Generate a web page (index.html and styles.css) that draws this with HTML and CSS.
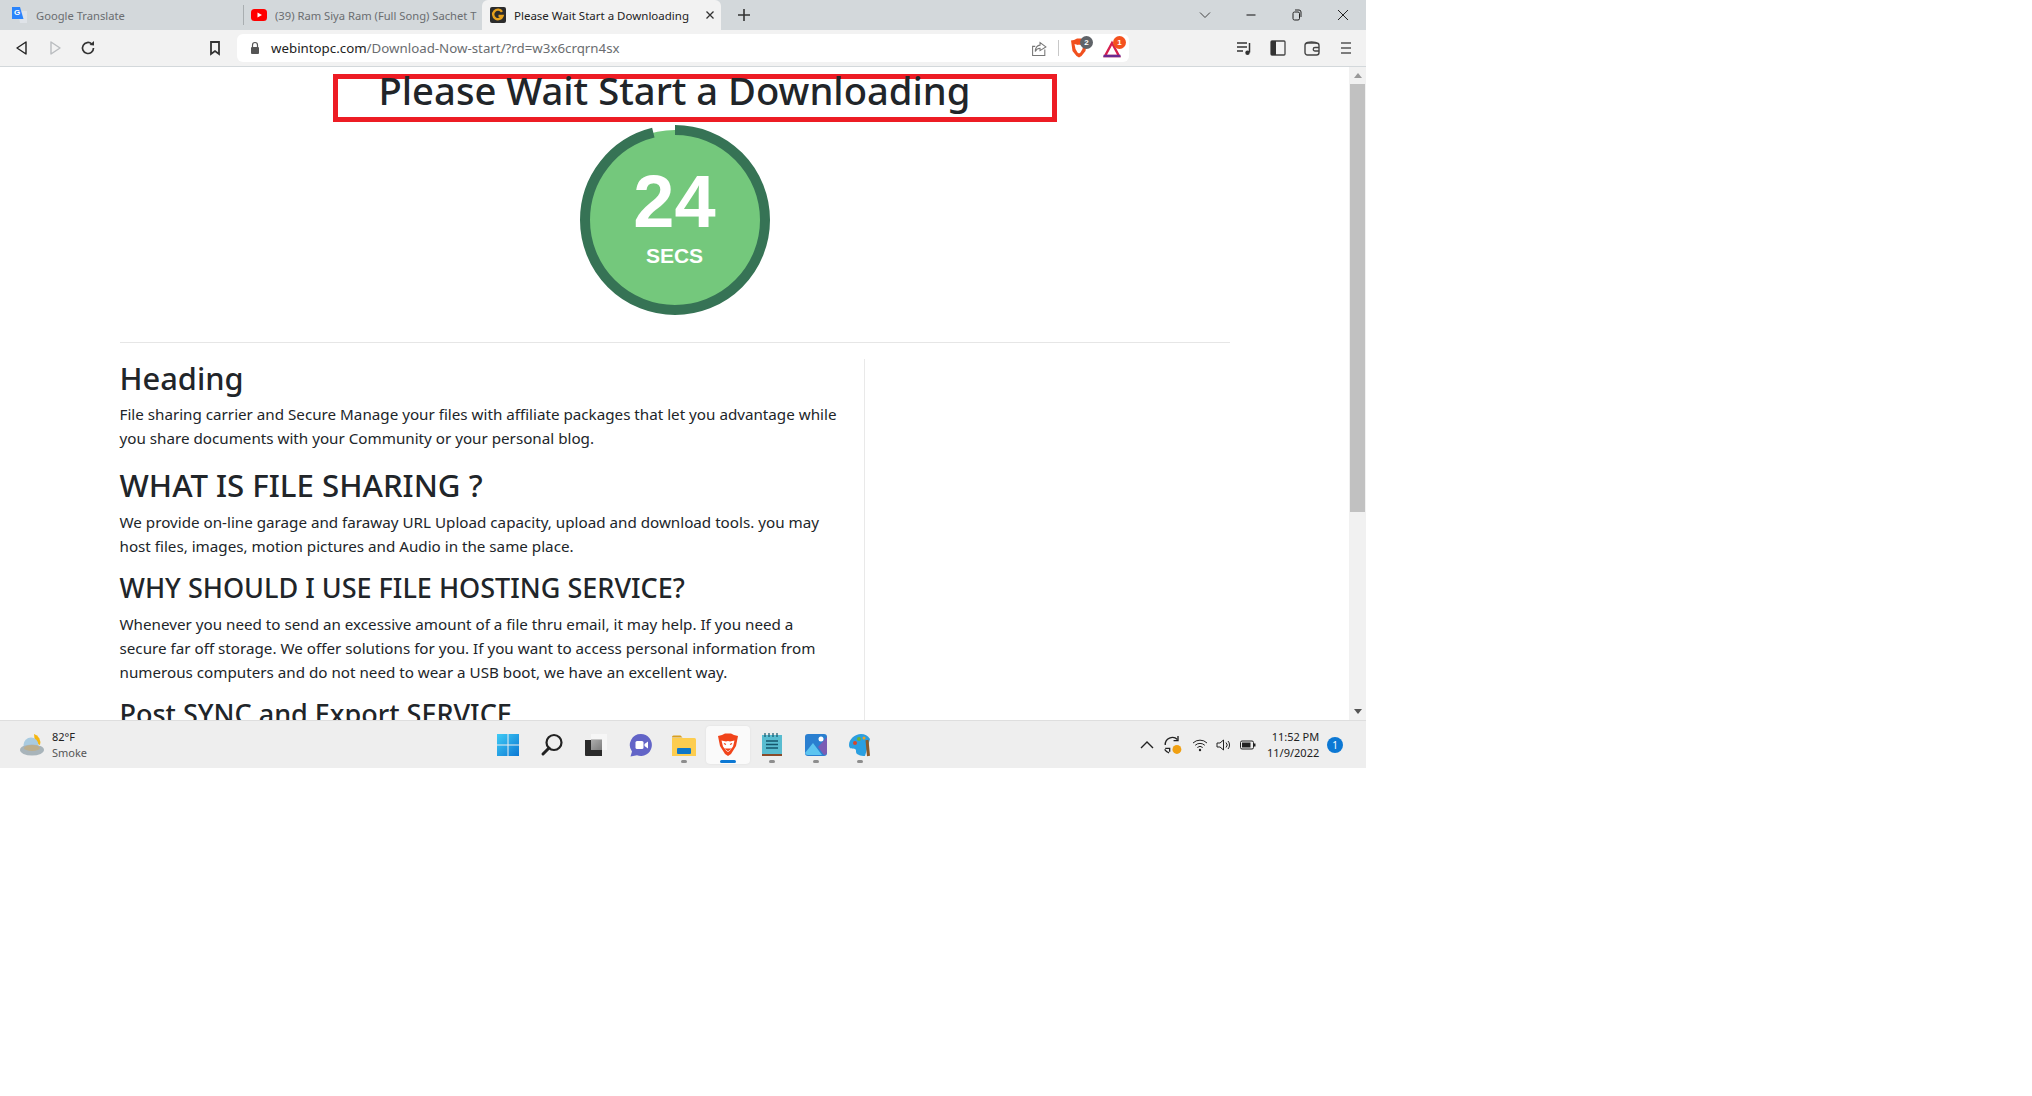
FILE: index.html
```html
<!DOCTYPE html>
<html lang="en">
<head>
<meta charset="utf-8">
<title>Please Wait Start a Downloading</title>
<link rel="stylesheet" href="styles.css">
</head>
<body>
<div class="win">
  <div class="tabstrip">
    <div class="tab tab-first">
      <svg class="fav" viewBox="0 0 16 16"><path d="M6 4h9v12H8z" fill="#dfe3e8"/><path d="M0 0h8l3.500 12H0z" fill="#2a84fc"/><text x="2" y="8" class="favg">G</text></svg>
      <span class="tab-title">Google Translate</span>
    </div>
    <div class="tab tab-second">
      <svg class="fav" viewBox="0 0 16 16"><rect x="0" y="2" width="16" height="12" rx="3.500" fill="#f00"/><path d="M6.500 5.500v5L11 8z" fill="#fff"/></svg>
      <span class="tab-title tab-title-yt">(39) Ram Siya Ram (Full Song) Sachet T</span>
    </div>
    <div class="tab tab-on">
      <svg class="fav" viewBox="0 0 16 16"><rect x="0" y="0" width="16" height="16" rx="2" fill="#2c2c2c"/><path d="M12 4.800A4.800 4.800 0 1 0 12.500 9H8.500" fill="none" stroke="#e7a11c" stroke-width="2.400"/></svg>
      <span class="tab-title dark">Please Wait Start a Downloading</span>
      <svg class="tabx" viewBox="0 0 10 10"><path d="M1.500 1.500l7 7M8.500 1.500l-7 7" stroke="#333" stroke-width="1.300"/></svg>
    </div>
    <svg class="plus" viewBox="0 0 12 12"><path d="M6 0v12M0 6h12" stroke="#333" stroke-width="1.600"/></svg>
    <div class="winctl">
      <svg class="ctl" viewBox="0 0 12 12"><path d="M1 3.500l5 5 5-5" fill="none" stroke="#444"/></svg>
      <svg class="ctl" viewBox="0 0 12 12"><path d="M1.500 6h9" stroke="#222" stroke-width="1.100"/></svg>
      <svg class="ctl" viewBox="0 0 12 12"><rect x="2" y="3" width="6.500" height="8" rx="1.500" fill="none" stroke="#222"/><path d="M4 1h4a2 2 0 0 1 2 2v5" fill="none" stroke="#222"/></svg>
      <svg class="ctl" viewBox="0 0 12 12"><path d="M1 1l10 10M11 1L1 11" stroke="#222"/></svg>
    </div>
  </div>
  <div class="toolbar">
    <svg class="nav" viewBox="0 0 16 16"><path d="M12 2v12L3 8z" fill="none" stroke="#222" stroke-width="1.400" stroke-linejoin="round"/></svg>
    <svg class="nav" viewBox="0 0 16 16"><path d="M4 2v12l9-6z" fill="none" stroke="#b9bcbf" stroke-width="1.400" stroke-linejoin="round"/></svg>
    <svg class="nav" viewBox="0 0 16 16"><path d="M13.500 8a5.500 5.500 0 1 1-1.700-4" fill="none" stroke="#333" stroke-width="1.700"/><path d="M9.500 5l4.500.5V1z" fill="#333"/></svg>
    <svg class="nav book" viewBox="0 0 16 16"><path d="M4 2h8v12l-4-3-4 3z" fill="none" stroke="#333" stroke-width="1.800"/></svg>
    <div class="omni">
      <svg class="lock" viewBox="0 0 12 14"><path d="M3.500 6V4a2.500 2.500 0 0 1 5 0v2" fill="none" stroke="#555" stroke-width="1.200"/><rect x="2" y="6" width="8" height="7" rx="1" fill="#555"/></svg>
      <span class="url"><span class="url-host">webintopc.com</span>/Download-Now-start/?rd=w3x6crqrn4sx</span>
      <svg class="share" viewBox="0 0 16 16"><path d="M8.500 10V7.800c-2 0-3.500.8-4.500 3 0-3.500 2-6 4.500-6V2.500L14 6.500z M13 9v5.500H1.500V6H4" fill="none" stroke="#777" stroke-width="1"/></svg>
      <span class="omni-sep"></span>
      <span class="ext">
        <svg class="ext-ic" viewBox="0 0 18 20"><path d="M4 2l3-1.500h4L14 2l3 .5-1.500 10.500-4 5L9 19.500 6.500 18l-4-5L1 2.500z" fill="#f1501e"/><path d="M4.500 6L8 7l1-.5 1 .5 3.500-1-1 5-2 3.500-1.500 1-1.500-1-2-3.500z" fill="#fff"/></svg>
        <span class="badge badge-gray">2</span>
      </span>
      <span class="ext">
        <svg class="ext-ic" viewBox="0 0 18 20"><path d="M9 5L16 18H2z" fill="none" stroke="#d61f4f" stroke-width="2.400"/><path d="M0.500 18h17" stroke="#6a2a90" stroke-width="2.400"/></svg>
        <span class="badge badge-red">1</span>
      </span>
    </div>
    <div class="tools">
      <svg class="tool" viewBox="0 0 16 16"><path d="M1 3h10M1 7h10M1 11h6" stroke="#333" stroke-width="1.400"/><path d="M13.500 3v9.500" stroke="#333" stroke-width="1.500"/><circle cx="11.500" cy="12.800" r="2.200" fill="#333"/></svg>
      <svg class="tool" viewBox="0 0 16 16"><rect x="1" y="1" width="14" height="14" rx="1" fill="none" stroke="#444" stroke-width="1.300"/><rect x="1" y="1" width="5" height="14" fill="#333"/></svg>
      <svg class="tool" viewBox="0 0 16 16"><rect x="1" y="3" width="14" height="12" rx="2.500" fill="none" stroke="#444" stroke-width="1.400"/><path d="M2 3.500c1-2 10-2 11 0M15 7.500h-4a1.700 1.700 0 0 0 0 3.500h4" fill="none" stroke="#444" stroke-width="1.300"/></svg>
      <svg class="tool" viewBox="0 0 16 16"><path d="M3 3h10M3 8h10M3 13h10" stroke="#555" stroke-width="1.700"/></svg>
    </div>
  </div>
  <div class="view">
    <main class="page">
      <div class="title-wrap">
        <h1 class="title">Please Wait Start a Downloading</h1>
      </div>
      <div class="timer">
        <svg class="ring" viewBox="0 0 190 190">
          <circle cx="95" cy="95" r="90" fill="#74c87c"/>
          <circle cx="95" cy="95" r="90" fill="none" stroke="#367355" stroke-width="10" pathLength="360" stroke-dasharray="346 14" transform="rotate(-90 95 95)"/>
        </svg>
        <div class="timer-text">
          <span class="timer-num">24</span>
          <span class="timer-lbl">SECS</span>
        </div>
      </div>
      <hr class="rule">
      <div class="cols">
        <section class="article">
          <h2 class="h-a">Heading</h2>
          <p>File sharing carrier and Secure Manage your files with affiliate packages that let you advantage while you share documents with your Community or your personal blog.</p>
          <h2 class="h-b">WHAT IS FILE SHARING ?</h2>
          <p>We provide on-line garage and faraway URL Upload capacity, upload and download tools. you may host files, images, motion pictures and Audio in the same place.</p>
          <h3 class="h-c">WHY SHOULD I USE FILE HOSTING SERVICE?</h3>
          <p>Whenever you need to send an excessive amount of a file thru email, it may help. If you need a secure far off storage. We offer solutions for you. If you want to access personal information from numerous computers and do not need to wear a USB boot, we have an excellent way.</p>
          <h3 class="h-c">Post SYNC and Export SERVICE</h3>
        </section>
        <aside class="side"></aside>
      </div>
    </main>
    <div class="scrollbar">
      <span class="arrow arrow-up"></span>
      <span class="thumb"></span>
      <span class="arrow arrow-down"></span>
    </div>
  </div>
  <footer class="taskbar">
    <div class="weather">
      <svg class="wx" viewBox="0 0 26 24"><path d="M15 1a9 9 0 0 1 6 11l-5-2z" fill="#f5b60f"/><circle cx="12" cy="12" r="7.500" fill="#a9cbe0"/><ellipse cx="13" cy="17" rx="12" ry="5.500" fill="#a8b4ba"/><ellipse cx="13" cy="15" rx="8" ry="3" fill="#bcae8c"/></svg>
      <div class="wx-text"><span class="wx-temp">82°F</span><span class="wx-cond">Smoke</span></div>
    </div>
    <div class="apps">
      <span class="app"><svg class="app-ic" viewBox="0 0 24 24"><defs><linearGradient id="winlogo" x1="0" y1="0" x2="1" y2="1"><stop offset="0" stop-color="#3fcbf5"/><stop offset="1" stop-color="#0c78d4"/></linearGradient></defs><path d="M1 1h10.500v10.500H1zM12.500 1H23v10.500H12.500zM1 12.500h10.500V23H1zM12.500 12.500H23V23H12.500z" fill="url(#winlogo)"/></svg></span>
      <span class="app"><svg class="app-ic" viewBox="0 0 24 24"><circle cx="14" cy="9.500" r="7.500" fill="none" stroke="#222" stroke-width="2.200"/><path d="M9 15l-6 6" stroke="#222" stroke-width="3" stroke-linecap="round"/></svg></span>
      <span class="app"><svg class="app-ic" viewBox="0 0 24 24"><defs><linearGradient id="tv" x1="0" y1="0" x2="1" y2="1"><stop offset="0" stop-color="#8a8a8a"/><stop offset="1" stop-color="#111"/></linearGradient></defs><rect x="7" y="1" width="16" height="16" fill="#f6f6f6"/><rect x="7" y="6" width="11" height="11" fill="#c4c4c4"/><path d="M1 7h6v10h11v6H2a1 1 0 0 1-1-1z" fill="#2a2a2a"/><rect x="7" y="7" width="11" height="10" fill="url(#tv)" opacity=".4"/></svg></span>
      <span class="app"><svg class="app-ic" viewBox="0 0 24 24"><path d="M13 1a11 11 0 1 1-4 21.300L2.500 23.500l1.500-5A11 11 0 0 1 13 1z" fill="#6264c7"/><rect x="7.500" y="8" width="8" height="8" rx="1.500" fill="#fff"/><path d="M16.500 11l3.500-2.500v7L16.500 13z" fill="#fff"/></svg></span>
      <span class="app app-dot"><svg class="app-ic" viewBox="0 0 24 24"><path d="M0 4a1.500 1.500 0 0 1 1.500-1.500h7l2 2H0z" fill="#d9a020"/><path d="M0 5h22.500a1.500 1.500 0 0 1 1.500 1.500V23H0z" fill="#fdcd4f"/><rect x="5" y="15" width="14" height="6" rx="1" fill="#0f78c8"/></svg></span>
      <span class="app app-on"><svg class="app-ic" viewBox="0 0 24 24"><path d="M6 2l3-1.500h6L18 2l4 1-2 10-5 8-3 2-3-2-5-8L2 3z" fill="#f1441a"/><path d="M5.500 7.500L10 8.500l2-.5 2 .5 4.500-1-1.500 6-3 4-2 1.500-2-1.500-3-4z" fill="#fff"/><path d="M8 10.500l2 1M16 10.500l-2 1M10 16h4l-2 1.500z" stroke="#f1441a" stroke-width="1.200" fill="#f1441a"/></svg></span>
      <span class="app app-dot"><svg class="app-ic" viewBox="0 0 24 24"><rect x="2" y="2" width="20" height="21" fill="#58bcd0"/><rect x="2" y="21" width="20" height="2" fill="#8a4b2a"/><path d="M6 8h12M6 11.500h12M6 15h12" stroke="#15566c" stroke-width="1.600"/><path d="M5 0v4M9 0v4M13 0v4M17 0v4" stroke="#15566c" stroke-width="1.200"/></svg></span>
      <span class="app app-dot"><svg class="app-ic" viewBox="0 0 24 24"><rect x="1" y="1" width="22" height="22" rx="3" fill="#2a7fd0"/><path d="M23 4v15a3 3 0 0 1-3 3l-6-8z" fill="#7a5cb4"/><path d="M1 20l8-10 9 12H4a3 3 0 0 1-3-2z" fill="#5cc4f0"/><circle cx="17" cy="6" r="2.500" fill="#fff"/></svg></span>
      <span class="app app-dot"><svg class="app-ic" viewBox="0 0 24 24"><path d="M13 1a11 11 0 0 1 9 5l-5 17a11 11 0 0 1-8-2c-2-2 0-4-2-5s-6 1-6-4C1 6 7 1 13 1z" fill="#2b9fe0"/><circle cx="7" cy="10" r="2" fill="#d8472a"/><circle cx="11" cy="6" r="2" fill="#6bb33a"/><circle cx="16" cy="5" r="1.500" fill="#f0a020"/><path d="M19 7l1.500 16" stroke="#8a5a2a" stroke-width="3"/></svg></span>
    </div>
    <div class="tray">
      <svg class="tr-up" viewBox="0 0 14 10"><path d="M1 8l6-6 6 6" fill="none" stroke="#222" stroke-width="1.400"/></svg>
      <svg class="tr-sync" viewBox="0 0 18 18"><path d="M2 9a6.500 6.500 0 0 1 11-5M1.500 13a6.500 6.500 0 0 0 4 3" fill="none" stroke="#222" stroke-width="1.200"/><path d="M13.500 1v4h-4M2 12h4v3" fill="none" stroke="#222" stroke-width="1.200"/><circle cx="12.500" cy="13" r="4" fill="#f0a012"/></svg>
      <svg class="tr-ic" viewBox="0 0 16 16"><path d="M1 6a10 10 0 0 1 14 0M3.200 8.300a7 7 0 0 1 9.600 0M5.300 10.500a4 4 0 0 1 5.400 0" fill="none" stroke="#222" stroke-width="1"/><circle cx="8" cy="13" r="1.200" fill="#222"/></svg>
      <svg class="tr-ic" viewBox="0 0 16 16"><path d="M1 6h3l3.500-3v10L4 10H1zM10 5.500a3.500 3.500 0 0 1 0 5M12 4a6 6 0 0 1 0 8" fill="none" stroke="#222" stroke-width="1"/></svg>
      <svg class="tr-ic" viewBox="0 0 16 16"><rect x="0.500" y="4" width="13" height="8" rx="1.500" fill="none" stroke="#222"/><rect x="2" y="5.500" width="8.500" height="5" fill="#222"/><rect x="14" y="6.500" width="1.500" height="3" fill="#222"/></svg>
      <div class="clock"><span>11:52 PM</span><span>11/9/2022</span></div>
      <span class="notif">1</span>
    </div>
  </footer>
</div>
</body>
</html>
```
FILE: styles.css
```css
* { box-sizing: border-box; }
html, body { margin: 0; padding: 0; background: #fff; }
body { font-family: "Noto Sans", "Open Sans", sans-serif; color: #212529; }
.win { width: 1366px; height: 768px; display: flex; flex-direction: column; overflow: hidden; }

.tabstrip { height: 30px; background: #d3d8db; display: flex; align-items: center; flex: none; }
.tab { height: 30px; display: flex; align-items: center; gap: 8px; flex: none; }
.tab-first { width: 243px; padding-left: 12px; }
.tab-second { width: 239px; padding-left: 7px; border-left: 1px solid #a9aeb1; height: 20px; }
.tab-on { width: 239px; padding-left: 8px; background: #f2f2f2; border-radius: 6px 6px 0 0; }
.fav { width: 16px; height: 16px; flex: none; }
.favg { font: 700 8px "Liberation Sans", sans-serif; fill: #fff; }
.tab-title { font: 11.200px "Noto Sans", sans-serif; color: #6a6d70; white-space: nowrap; overflow: hidden; }
.tab-title-yt { width: 203px; }
.tab-title.dark { color: #222; width: 183px; font-size: 11.500px; }
.tabx { width: 10px; height: 10px; flex: none; }
.plus { width: 12px; height: 12px; margin-left: 17px; flex: none; }
.winctl { margin-left: auto; display: flex; align-items: center; gap: 34px; padding-right: 17px; }
.ctl { width: 12px; height: 12px; display: block; }

.toolbar { height: 37px; background: #f2f2f2; border-bottom: 1px solid #d3d8db; display: flex; align-items: center; flex: none; padding-left: 14px; }
.nav { width: 16px; height: 16px; flex: none; margin-right: 17px; }
.book { margin-left: 94px; margin-right: 14px; }
.omni { width: 892px; height: 28px; background: #fff; border-radius: 6px; display: flex; align-items: center; padding-left: 12px; padding-right: 2px; flex: none; }
.lock { width: 12px; height: 14px; flex: none; }
.url { font: 13.300px "Noto Sans", sans-serif; color: #6a6d70; margin-left: 10px; }
.url-host { color: #222; }
.share { width: 17px; height: 17px; margin-left: auto; }
.omni-sep { width: 1px; height: 16px; background: #c8c8c8; margin: 0 11px 0 10px; }
.ext { position: relative; width: 18px; height: 20px; margin-right: 15px; display: block; }
.ext:last-child { margin-right: 6px; }
.ext-ic { width: 18px; height: 20px; display: block; }
.badge { position: absolute; top: -2px; right: -5px; width: 13px; height: 13px; border-radius: 50%; color: #fff; font: 700 8px/13px "Liberation Sans", sans-serif; text-align: center; }
.badge-gray { background: #5f6368; }
.badge-red { background: #f4511e; }
.tools { display: flex; align-items: center; gap: 18px; margin-left: 107px; }
.tool { width: 16px; height: 16px; display: block; }

.view { height: 653px; display: flex; flex: none; background: #fff; overflow: hidden; }
.page { width: 1349px; flex: none; padding: 7px 0 0 0; overflow: hidden; display: flex; flex-direction: column; align-items: center; }
.title-wrap { width: 724px; height: 48px; border: 5px solid #ed1c24; display: flex; justify-content: center; flex: none; margin-left: 40px; }
.title { margin: -11px 0 0 -40px; font: 500 38.200px/1.200 "Noto Sans", "Open Sans", sans-serif; color: #212529; white-space: nowrap; }
.timer { position: relative; width: 190px; height: 190px; flex: none; margin-top: 3px; }
.ring { width: 190px; height: 190px; display: block; }
.timer-text { position: absolute; inset: 0; display: flex; flex-direction: column; align-items: center; }
.timer-num { font: 700 74px/1 "Liberation Sans", sans-serif; color: #fff; margin-top: 40px; }
.timer-lbl { font: 700 21px/1 "Liberation Sans", sans-serif; color: #fff; margin-top: 6px; }
.rule { width: 1110px; margin: 27px 0 0; border: 0; border-top: 1px solid #e6e6e6; flex: none; }
.cols { width: 1110px; display: flex; flex: none; margin-top: 16px; }
.article { width: 745px; border-right: 1px solid #e9e9e9; padding-right: 24px; }
.article h2, .article h3 { margin: 0; font-family: "Noto Sans", sans-serif; font-weight: 500; color: #212529; }
.h-a { font-size: 30.800px; line-height: 38px; margin-bottom: 5px !important; }
.h-b { font-size: 31.200px; line-height: 38px; margin-bottom: 6px !important; }
.h-c { font-size: 27px; line-height: 32px; margin-top: -2px !important; margin-bottom: 8px !important; }
.article p { margin: 0 0 16px; font: 15.200px/24px "Noto Sans", sans-serif; color: #212529; }
.side { flex: 1; }

.scrollbar { width: 17px; flex: none; background: #f1f1f1; display: flex; flex-direction: column; align-items: center; }
.arrow { width: 0; height: 0; border-left: 4px solid transparent; border-right: 4px solid transparent; flex: none; }
.arrow-up { border-bottom: 5px solid #999; margin-top: 6px; }
.arrow-down { border-top: 5px solid #555; margin-top: auto; margin-bottom: 6px; }
.thumb { width: 15px; height: 428px; background: #c1c1c1; margin-top: 6px; flex: none; }

.taskbar { height: 48px; background: #eeeeee; border-top: 1px solid #dedede; display: flex; align-items: center; flex: none; }
.weather { display: flex; align-items: center; gap: 7px; padding-left: 19px; width: 470px; flex: none; }
.wx { width: 26px; height: 24px; flex: none; }
.wx-text { display: flex; flex-direction: column; font: 11px/16px "Noto Sans", sans-serif; }
.wx-temp { color: #222; }
.wx-cond { color: #555; }
.apps { display: flex; align-items: center; margin-left: 16px; }
.app { width: 44px; height: 38px; display: flex; align-items: center; justify-content: center; position: relative; border-radius: 4px; }
.app-ic { width: 24px; height: 24px; display: block; }
.app-dot::after, .app-on::after { content: ""; position: absolute; bottom: 1px; left: 50%; width: 6px; height: 3px; margin-left: -3px; border-radius: 2px; background: #8d8d8d; }
.app-on { background: #fafafa; box-shadow: 0 0 2px #ddd; }
.app-on::after { width: 16px; margin-left: -8px; background: #0c78d4; }
.tray { margin-left: auto; display: flex; align-items: center; width: 226px; }
.tr-up { width: 14px; height: 10px; margin-right: 9px; }
.tr-sync { width: 20px; height: 20px; margin-right: 9px; }
.tr-ic { width: 16px; height: 16px; margin-right: 8px; }
.clock { display: flex; flex-direction: column; align-items: flex-end; font: 11px/16px "Noto Sans", sans-serif; color: #222; margin-left: 3px; }
.notif { width: 16px; height: 16px; border-radius: 50%; background: #0c78d4; color: #fff; font: 10px/16px "Noto Sans", sans-serif; text-align: center; margin-left: 8px; }
```
